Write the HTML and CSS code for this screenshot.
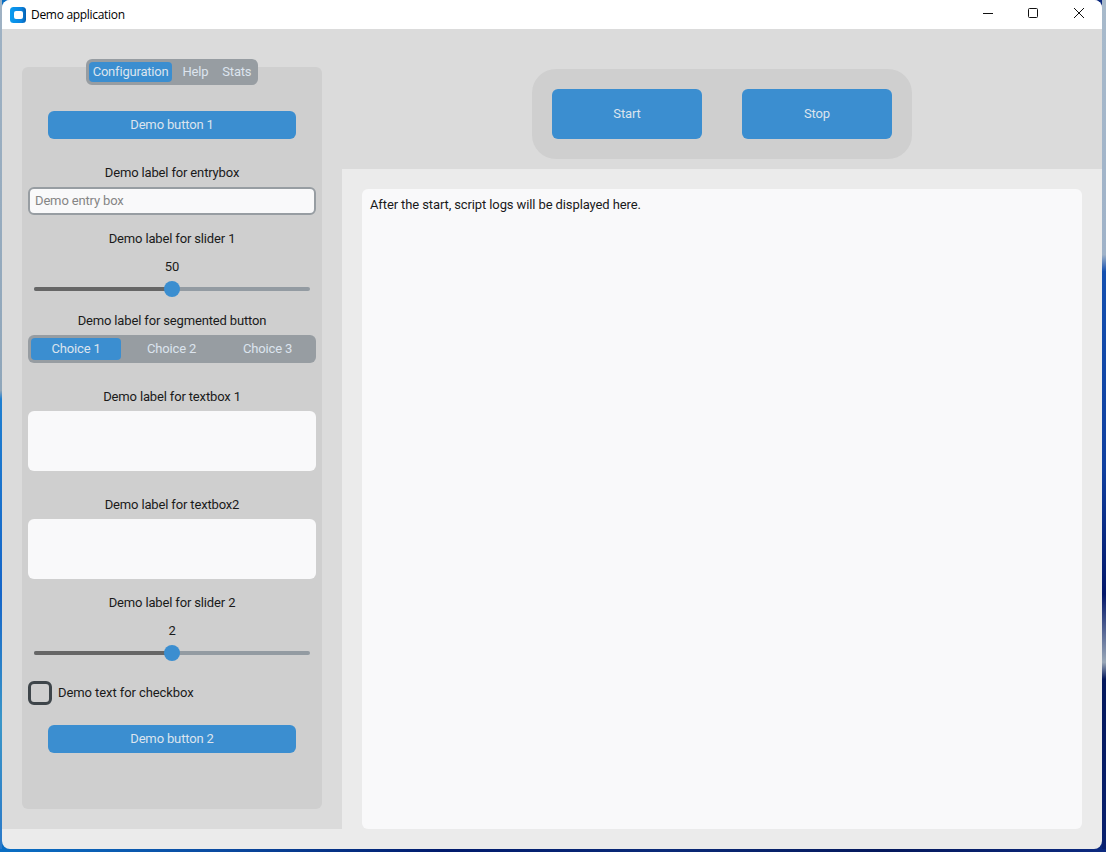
FILE: index.html
```html
<!DOCTYPE html>
<html lang="en">
<head>
<meta charset="utf-8">
<title>Demo application</title>
<link rel="stylesheet" href="styles.css">
</head>
<body>
<div class="window">
  <header class="titlebar">
    <svg class="app-icon" width="16" height="16" viewBox="0 0 16 16"><defs><linearGradient id="ic" x1="0" x2="1" y1="0" y2="0"><stop offset="0" stop-color="#0a9cf0"/><stop offset="0.7" stop-color="#0a84e0"/><stop offset="1" stop-color="#0560b0"/></linearGradient></defs><rect width="16" height="16" rx="3.5" fill="url(#ic)"/><rect x="4" y="4" width="9" height="8" rx="2" fill="#fff"/></svg>
    <span class="app-title">Demo application</span>
    <div class="win-controls">
      <svg width="46" height="29" viewBox="0 0 46 29"><path d="M19 13.5h10" stroke="#111" fill="none"/></svg>
      <svg width="46" height="29" viewBox="0 0 46 29"><rect x="18.5" y="8.5" width="9" height="9" rx="1" stroke="#111" fill="none"/></svg>
      <svg width="46" height="29" viewBox="0 0 46 29"><path d="M18 8l10 10M28 8L18 18" stroke="#111" fill="none"/></svg>
    </div>
  </header>
  <main class="content">
    <aside class="sidebar">
      <nav class="tabs">
        <span class="tab tab-active">Configuration</span>
        <span class="tab">Help</span>
        <span class="tab">Stats</span>
      </nav>
      <section class="panel">
        <button class="btn btn-side">Demo button 1</button>
        <div class="label m23">Demo label for entrybox</div>
        <div class="entry m5">Demo entry box</div>
        <div class="label m13">Demo label for slider 1</div>
        <div class="label m8">50</div>
        <div class="slider m5"><span class="slider-fill"></span><span class="slider-thumb"></span></div>
        <div class="label m13">Demo label for segmented button</div>
        <div class="segmented m5">
          <span class="seg seg-active">Choice 1</span>
          <span class="seg">Choice 2</span>
          <span class="seg">Choice 3</span>
        </div>
        <div class="label m23">Demo label for textbox 1</div>
        <div class="textbox m5"></div>
        <div class="label m23">Demo label for textbox2</div>
        <div class="textbox m5"></div>
        <div class="label m13">Demo label for slider 2</div>
        <div class="label m8">2</div>
        <div class="slider m5"><span class="slider-fill"></span><span class="slider-thumb"></span></div>
        <label class="check-row">
          <span class="check-box"></span>
          <span class="check-text">Demo text for checkbox</span>
        </label>
        <button class="btn btn-side m20">Demo button 2</button>
      </section>
    </aside>
    <section class="main">
      <div class="top">
        <div class="pill">
          <button class="btn btn-big">Start</button>
          <button class="btn btn-big">Stop</button>
        </div>
      </div>
      <div class="log-wrap">
        <div class="log">After the start, script logs will be displayed here.</div>
      </div>
    </section>
  </main>
</div>
</body>
</html>
```
FILE: styles.css
```css
* { box-sizing: border-box; }
html, body { margin: 0; height: 100%; }
body {
  width: 1106px;
  height: 852px;
  overflow: hidden;
  padding-left: 2px;
  background:
    linear-gradient(180deg, #9fb2c4 0, #8fa6ba 46%, #1f7fd0 47%, #1565c8 70%, #3a96c8 85%, #2a78c8 100%) left top / 2px 849px no-repeat,
    linear-gradient(180deg, #a8bacb 0, #9fb2c8 30%, #1450b0 32%, #1040a0 55%, #04186a 70%, #9aa8b8 78%, #04185c 80%, #0a2270 100%) right top / 4px 849px no-repeat,
    linear-gradient(90deg, #0a6fc4 0, #0a4aa0 20%, #001a6c 40%, #0a2a78 60%, #04185c 80%, #0c2a80 100%);
  font-family: Roboto, "Liberation Sans", sans-serif;
  font-size: 13px;
  letter-spacing: -0.15px;
  color: #1a1a1a;
}
.window {
  width: 1100px;
  height: 849px;
  background: #ebebeb;
  border-radius: 8px;
  overflow: hidden;
  display: flex;
  flex-direction: column;
}
.titlebar {
  height: 29px;
  flex: none;
  background: #fff;
  display: flex;
  align-items: center;
  padding-left: 8px;
}
.app-icon { flex: none; }
.app-title {
  margin-left: 5px;
  font-family: "Open Sans", "Noto Sans", sans-serif;
  font-size: 12px;
  letter-spacing: -0.3px;
  color: #000;
}
.win-controls { margin-left: auto; display: flex; height: 29px; }
.content { flex: 1; display: flex; min-height: 0; }
.sidebar {
  width: 340px;
  height: 800px;
  flex: none;
  background: #dbdbdb;
  padding: 30px 20px 20px;
  display: flex;
  flex-direction: column;
  align-items: center;
}
.tabs {
  position: relative;
  z-index: 1;
  height: 26px;
  margin-bottom: -18px;
  flex: none;
  display: flex;
  gap: 6px;
  padding: 3px;
  background: #979da2;
  border-radius: 6px;
  color: #dce4ee;
  line-height: 20px;
}
.tab { padding: 0 4px; border-radius: 4px; letter-spacing: -0.2px; }
.tab-active { background: #3b8ed0; }
.panel {
  width: 300px;
  height: 742px;
  flex: none;
  background: #cfcfcf;
  border-radius: 6px;
  padding: 44px 6px 0;
  display: flex;
  flex-direction: column;
  align-items: center;
}
.label {
  height: 20px;
  padding-top: 1px;
  line-height: 20px;
  text-align: center;
  white-space: nowrap;
}
.m5 { margin-top: 5px; }
.m8 { margin-top: 8px; }
.m13 { margin-top: 13px; }
.m20 { margin-top: 20px; }
.m23 { margin-top: 23px; }
.btn {
  border: 0;
  padding: 0 0 2px;
  background: #3b8ed0;
  color: #dce4ee;
  font: inherit;
  letter-spacing: inherit;
  border-radius: 6px;
}
.btn-side { width: 248px; height: 28px; flex: none; }
.btn-big { width: 150px; height: 50px; }
.entry {
  width: 288px;
  height: 28px;
  flex: none;
  border: 2px solid #979da2;
  border-radius: 6px;
  background: #f9f9fa;
  color: #858585;
  padding-left: 5px;
  line-height: 24px;
}
.slider {
  position: relative;
  width: 276px;
  height: 16px;
  flex: none;
}
.slider::before {
  content: "";
  position: absolute;
  left: 0; right: 0; top: 6px;
  height: 4px;
  border-radius: 2px;
  background: #939ba2;
}
.slider-fill {
  position: absolute;
  left: 0; top: 6px;
  width: 138px;
  height: 4px;
  border-radius: 2px;
  background: #666;
}
.slider-thumb {
  position: absolute;
  left: 130px; top: 0;
  width: 16px;
  height: 16px;
  border-radius: 50%;
  background: #3b8ed0;
}
.segmented {
  width: 288px;
  height: 28px;
  flex: none;
  background: #979da2;
  border-radius: 6px;
  padding: 3px;
  display: grid;
  grid-template-columns: 90px 1fr 1fr;
  gap: 5px;
  color: #dce4ee;
}
.seg { line-height: 22px; text-align: center; border-radius: 4px; }
.seg-active { background: #3b8ed0; }
.textbox {
  width: 288px;
  height: 60px;
  flex: none;
  background: #f9f9fa;
  border-radius: 6px;
}
.check-row {
  width: 288px;
  margin-top: 20px;
  height: 24px;
  flex: none;
  display: flex;
  align-items: center;
  gap: 6px;
}
.check-box {
  width: 24px;
  height: 24px;
  border: 3px solid #3e454a;
  border-radius: 6px;
}
.check-text { line-height: 20px; white-space: nowrap; letter-spacing: -0.08px; }
.main { flex: 1; display: flex; flex-direction: column; min-width: 0; }
.top {
  height: 140px;
  flex: none;
  background: #dbdbdb;
  display: flex;
  justify-content: center;
  padding-top: 40px;
}
.pill {
  height: 90px;
  display: flex;
  gap: 40px;
  padding: 20px;
  background: #cfcfcf;
  border-radius: 24px;
}
.log-wrap { flex: 1; padding: 20px; min-height: 0; }
.log {
  height: 640px;
  background: #f9f9fa;
  border-radius: 6px;
  padding: 6px 8px;
  line-height: 20px;
  letter-spacing: -0.11px;
}
```
